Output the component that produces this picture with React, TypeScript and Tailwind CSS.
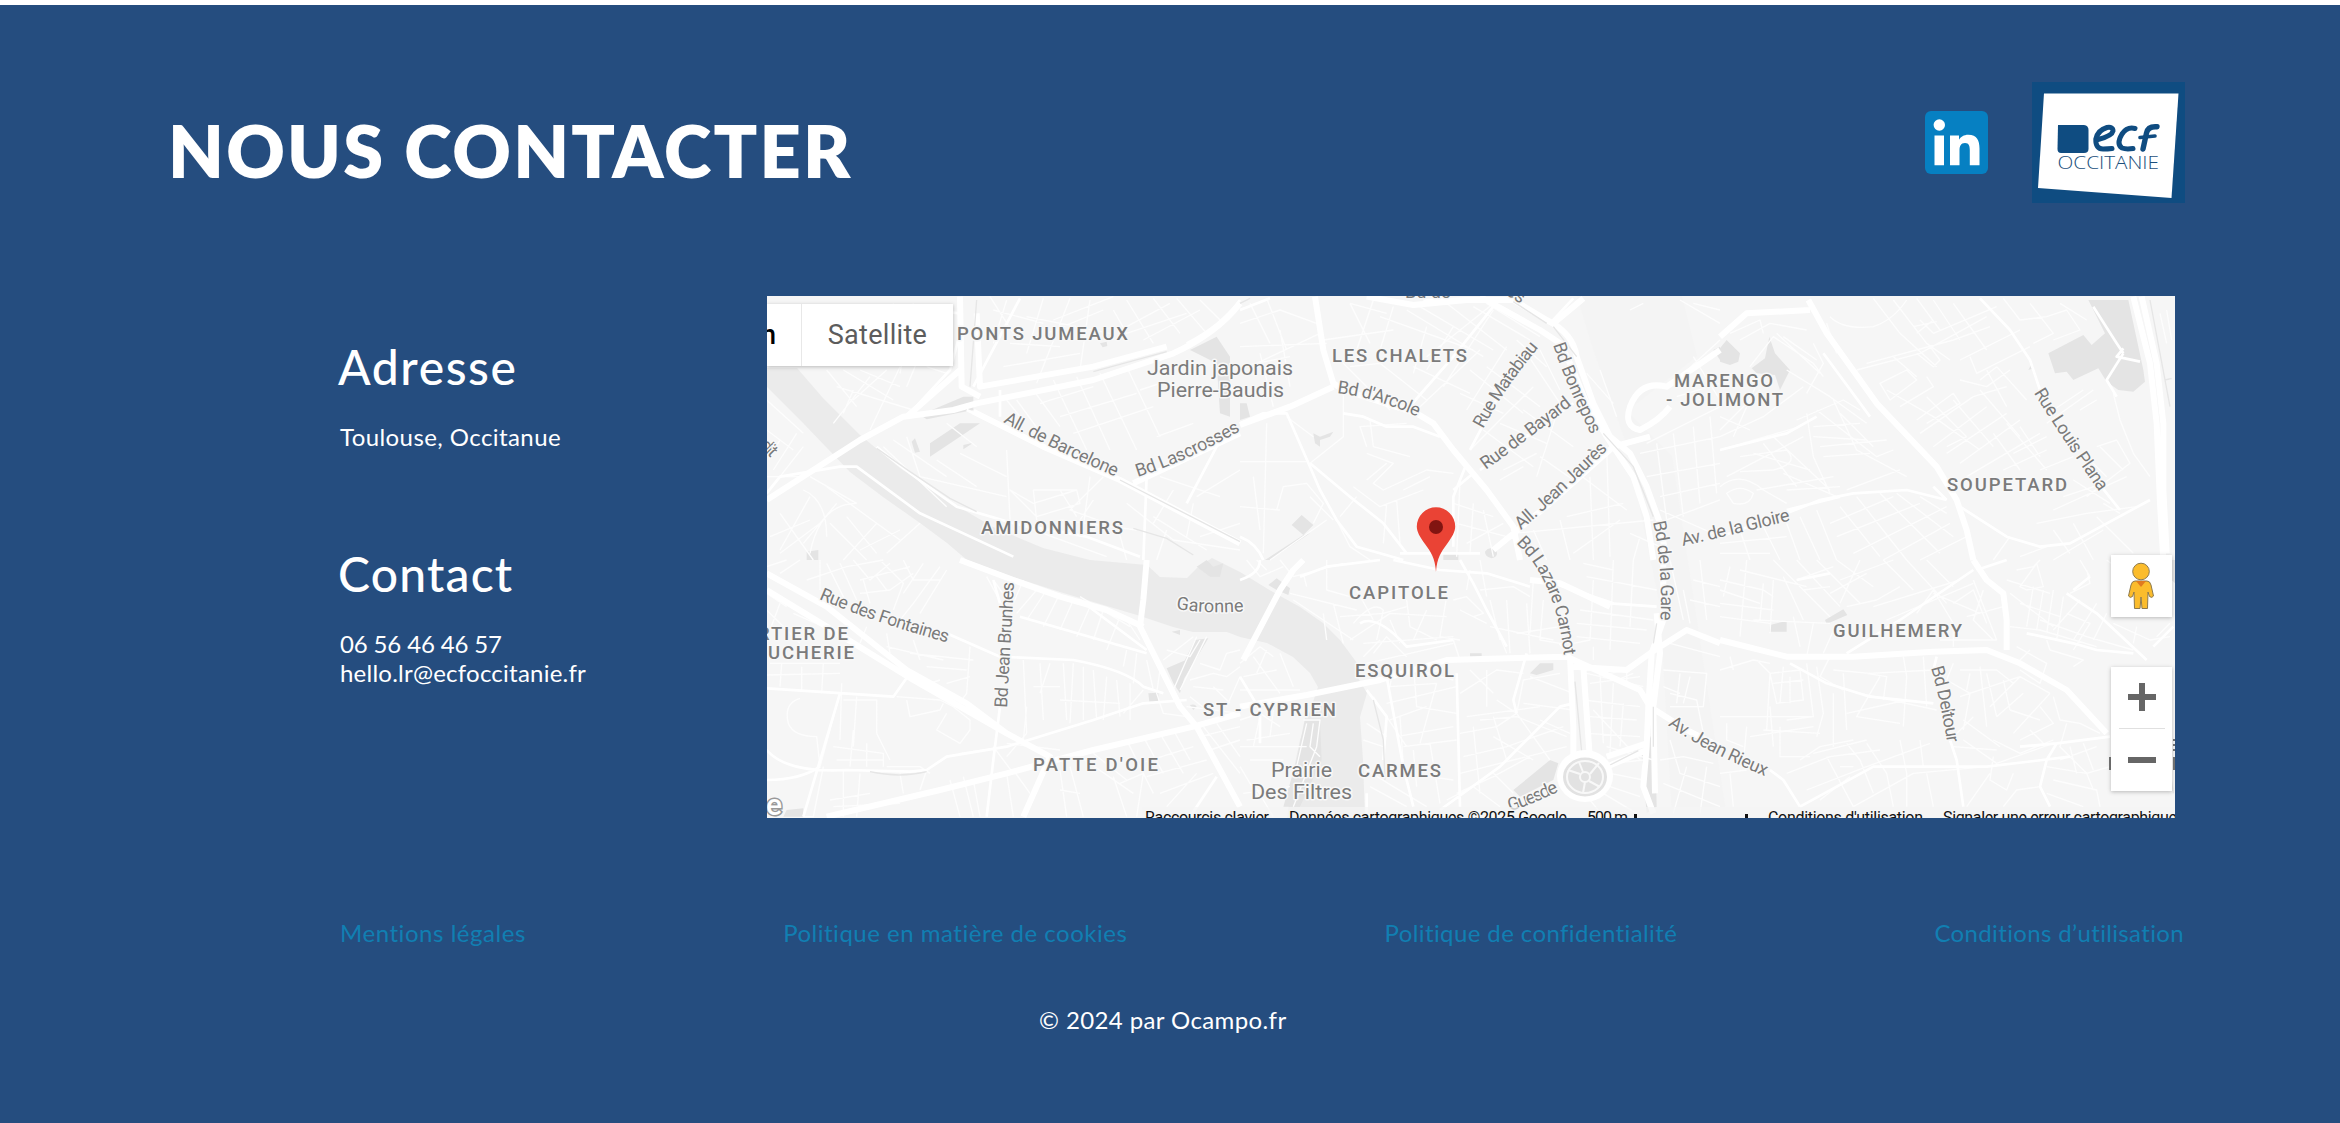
import React from 'react';

type Sector = {
  x: number;
  y: number;
  fine: string;
  medium: string;
  major: string;
  green: string;
  rail: string;
};

/* The street network is kept in six sectors, drawn at three times the map's scale. */
const sectors: Sector[] = [
  {
    x: -7,
    y: -6,
    fine: 'M400 40L430 180M430 60L560 90M460 40L420 250M500 230L560 250M540 50L440 290M250 240L400 330M300 240L420 290M330 260L220 400M380 240L280 330M200 240L290 350M420 230L330 420M230 290L460 360M280 300L250 370M20 330L130 430M20 420L100 480M110 430L40 540M60 450L30 500M130 470L60 560M20 560L140 560M150 560L290 640M130 600Q200 630 200 740M60 670L160 810M30 740L150 690M150 620L60 780M200 590L350 700L250 810M230 640L130 760M290 640Q180 640 150 790M350 700L420 750M420 720L300 780M480 700L380 790M260 680L350 790M210 700L320 810M60 790L180 700M370 470L560 650M400 450L560 560M440 440L480 560L740 620M530 510L650 590M600 490L740 560M740 480L750 690M560 400L650 470M750 600L820 640L950 600L960 640L830 680ZM820 600L830 690M900 600L950 680M820 600L950 600M990 560L970 710M1030 560L930 660L1040 700M900 470L1130 600M1000 630L960 690M690 20L760 130M700 60L850 100M740 30L700 160M850 25L800 190M930 25L830 280M990 30L960 240M880 90L1060 20M800 80L1050 130M860 130L1030 60M1060 60L1100 130L1280 70M1100 30L1180 160M1180 25L1260 130M1250 25L1340 130M1320 30L1390 100M1150 150L1320 60M1100 110L1230 40M740 330L780 380M770 330L850 440M820 300L900 410M880 270L980 480M950 260L1050 480M1020 250L1130 480M840 340L1000 290M900 380L1130 310M940 430L1180 350M1100 230L1200 440M1140 300L1200 280M1190 440L1300 400M1160 560L1310 480M1200 560L1380 620M1240 600L1180 700M1100 640L1240 750L1440 780M1180 680L1340 780M1300 640L1280 740M1320 740L1440 700M1070 700L1100 810M1220 720L1190 810M900 690L1130 720M740 690L1040 800M1370 470L1290 620M1440 540L1310 620M750 160L900 170M730 230L960 190',
    medium:
      'M20 610L60 560L240 530L290 530L480 670L760 800M350 470Q420 530 590 650L760 700L980 740L1140 800M620 360L900 490M720 300L720 380M500 60L600 70M780 25L640 290M1160 560L1150 810M1370 470L1280 640M1440 30Q1380 110 1280 160M440 380L570 240L600 130',
    major:
      'M20 630L300 450L430 380L580 360L650 340L1000 270L1240 190Q1370 130 1440 40M600 20L605 290L660 320M650 70L660 290L1000 230L1220 170M440 380L600 240M640 365L850 470L1080 570L1440 760M1120 580L1440 430',
    green:
      'M480 375L610 320L640 320L640 360L500 388ZM510 460L600 400L660 400L600 440L510 500ZM455 455L465 445L480 485L465 488ZM610 465L640 458L610 478ZM1290 180L1370 140L1410 200L1410 380L1380 370L1370 220ZM140 785L175 780L175 810L140 810ZM1020 160L1040 155L1042 168L1028 172Z',
    rail: 'M350 475L450 545L570 625L650 665M650 30L630 290M1080 570L1440 755M1120 715L1220 745L1300 795M1000 245L1220 185',
  },
  {
    x: 473,
    y: -6,
    fine: 'M0 100L120 60L230 100M30 40L90 160M80 25L140 180M0 170L260 160M50 220L240 130M120 120L150 290M0 230L150 200M60 190L100 350M330 40L440 70M330 40L390 160M400 30L350 180M460 50L420 180M250 150L460 120M420 80L700 180M500 60L730 200M540 50L760 180M620 40L800 180M700 50L870 150M740 40L900 140M560 200L780 25M610 290L760 60M530 360L720 180M560 110L520 250M640 110L560 240M520 230L690 310M560 330L420 220L330 230M300 210L450 360M690 240L850 370M740 230L900 350M660 310L790 370M800 170L680 360M860 190L960 340M900 180L960 300M830 150L920 230M690 480L800 370L880 290M780 400L920 460M730 420L880 530M960 340L890 560M850 360L1000 470M900 500L1000 570M890 490L790 540M780 570L850 530M0 515L200 515M80 400L70 790M0 650L120 660M40 560L60 720M310 290L310 440L210 520M220 440L140 380M390 390L400 470L510 500M380 470L360 410L500 400M380 490L460 520L400 580L430 600L560 540L640 550M440 520L380 570M490 600L570 560M340 590L420 650L550 600M110 660L130 590L200 580L250 640L220 700M280 690L210 620M260 690L90 810M290 690L330 770L390 810M440 640L430 760M350 620L300 680M470 630L480 760M660 570L650 800M700 640L690 790M730 660L760 800M640 640L760 680M650 700L800 740M680 760L790 700M820 730L1240 690M880 720L920 810M960 690L990 810M1050 560L1060 810M1100 470L1110 800M1000 540L1160 660M980 680L1150 640M1140 690L1000 790M1170 730L1260 770M1200 740L1180 810M1080 240L1130 380M1040 250L1120 340M1200 490L1440 440M1220 560L1440 520M1250 460L1280 690M1300 430L1330 680M1360 410L1380 640M1410 380L1430 610M1260 620L1440 580M1280 690L1440 630M1260 660L1440 740M1360 200L1440 330M1320 260L1440 150M1310 320L1440 280M1220 460L1440 350M1320 30L1440 100M1210 40L1170 60M1360 40L1440 60',
    medium:
      'M0 400L70 370L140 370L210 530L240 600L290 690L350 770L420 790L490 810M210 520L330 620L430 700L500 790M310 370L370 380L440 410L520 410L600 440M690 480L780 310L860 170M640 600L700 550M680 520L640 620L640 770M720 540L1000 340M500 360L640 200L760 50M0 740Q50 760 70 810M0 60L90 25M480 790L720 790M550 30L700 25M1000 25L930 100',
    major:
      'M225 20L250 180L280 280L310 300L530 370L580 400L640 480L740 600L820 710L840 810M0 405L150 350L280 290M380 20L520 45L680 30L820 30L920 90Q1000 130 1010 200L1060 340L1110 440L1170 490L1220 590L1260 700L1280 810M720 20L900 120L960 160L990 220L1040 340L1100 440L1180 560L1220 680L1240 810M760 780L930 640L1120 470L1230 440M940 100L1030 25M1440 180L1280 290Q1200 270 1170 350Q1150 410 1200 420Q1260 390 1290 350',
    green:
      'M0 340L20 340L30 380L0 390ZM220 430L240 440L280 425L270 440L240 450L240 470L225 460ZM155 705L185 675L220 705L190 735ZM190 735L210 730L90 810L75 810ZM1420 180L1440 170L1440 210ZM735 785Q750 765 770 785Q775 800 755 805Q735 800 735 785ZM610 790L655 785L655 810L610 810Z',
    rail: 'M820 35L920 100M940 110L1010 200M1090 430L1180 530L1240 680M0 40L30 25',
  },
  {
    x: 953,
    y: -6,
    fine: 'M330 80Q370 120 460 110Q520 90 560 30M460 25L540 130L650 230M520 30L620 160L690 210M590 25L660 120M640 30L720 150M700 40L800 180M580 110L650 95M600 90L640 130M590 130L640 90M410 240L600 190L800 80M440 220L700 150L810 110M520 200L590 260M590 190L640 230L660 210L630 170M640 130L830 50M850 25L900 90L980 80M930 40L1000 130L940 160M980 80L1040 60L1080 120L1000 150M1020 40L1100 90M750 200L770 250L930 170M720 210L760 190L900 120M480 280L560 240L590 270L510 330ZM500 300L640 380L780 480M540 350L640 290L620 260M590 390L700 310L720 340L620 400M600 430L760 320L860 290M640 470L800 350M680 490L860 370M720 520L900 390M740 560L960 430M780 270L830 230M800 240L860 350M830 230L920 330M870 240L800 290L720 270M620 320L740 440M700 330L820 470M780 300L900 440M820 430L900 540M860 400L980 540M900 410L960 500M880 490L980 440M850 540L980 480M960 540L1060 500M980 400L1120 300M1000 360L1090 300M1080 360L1130 330M1130 470L1190 450L1230 520L1100 620M1100 500L1160 560M1140 470L1210 540M1060 570L1170 640M1030 620L1150 580M1000 660L1220 560M1180 310L1200 390L1240 490L1290 560M1320 70L1340 160M1340 60L1355 150M0 440L130 380L250 290M0 420L120 300M0 380L90 420M40 440L120 260M90 230L160 140L280 220L310 260M190 140L290 210M170 130L300 250M30 130L120 90L130 130M60 150L150 100L260 120M280 160L310 220L260 310M320 100L350 190M330 130L380 220M200 240L330 320L440 400M230 390L370 330L420 360M260 370L280 500L330 610M290 360L470 500L520 480M340 330L410 480L560 560M360 370L460 470M280 410L420 400M280 440L440 450M300 470L500 450M310 500L450 490M0 480L240 410M20 560L250 440M100 490L270 540M130 460L230 590M160 440L330 600M60 500L200 480Q240 520 160 540L60 545M0 590Q60 540 130 600L200 640M20 610Q60 580 100 610Q90 650 40 640ZM110 600L340 560M190 550L350 620M200 600L360 590M380 600L540 540M360 650L480 800M410 620L560 810M480 610L660 790M530 610L700 740M600 620L680 670M330 700L520 620M350 740L600 640M400 790L680 650M490 810L690 700M600 810L740 740M240 680L300 810M290 660L350 810M200 700L240 810M120 690L180 810M60 720L90 810M0 760L200 740M0 790L150 790M680 470L740 440M950 700L1100 670L1250 650M1000 720L1050 790M1060 700L1120 810M1130 680L1240 790M1150 720L1000 810M1200 670L1150 640M870 740L820 810M900 800L980 770',
    medium:
      'M0 480L200 430L290 380M360 620L200 660M0 740L200 670L300 630L400 610L560 600L680 630M720 650L860 740L960 770L1050 760L1290 630M780 25L870 120L930 210L960 300M1120 50L1190 160L1210 190M1210 175L1190 200L1260 215M1210 190L1160 270L1190 320M1120 560L1200 660M680 630L640 590M310 190L450 380',
    major:
      'M0 140L80 70L270 60M265 30L320 130L470 340L650 530L710 630L740 720L760 810M1240 20L1290 220L1310 400L1320 640L1330 810M1265 20L1310 220L1330 400L1330 600L1340 790',
    green:
      'M0 175L20 150L60 190L55 215L30 225L0 215ZM95 235L135 205L148 140L165 190L210 240L180 300L165 255L110 250ZM985 190L1090 135L1115 165L1155 130L1105 30L1225 30L1270 240L1275 275L1240 305L1195 300L1160 275L1135 235L1060 270L1040 245L1005 250ZM925 240L935 222L942 235Z',
    rail: 'M1290 30L1350 350M1335 270L1355 265',
  },
  {
    x: -7,
    y: 264,
    fine: 'M20 20L80 0M60 40L120 0M180 0L180 90M140 60L260 20L370 0M200 10L260 130M240 10L290 120M280 0L330 60L390 10M300 60L450 20M300 100L390 90L460 40M310 60L330 130M350 50L380 90M360 0L430 70L400 150M430 0L460 60L540 60M490 10L430 100M540 20L460 130L420 180M560 30L480 160M20 100L80 140M60 130L30 210M100 160L190 200M20 150L120 250M320 200L300 250M380 220L390 280M380 260L550 300M460 240L480 300M450 280L640 300M500 320L620 330M560 370L630 350M630 260L620 400L590 440M540 360L480 380M20 345L240 340M65 310L60 380M125 320L125 390M190 310L185 400M30 310L240 310M245 370L240 540M240 400L180 620M250 420L350 420L350 520M290 410L280 560M120 415Q70 430 85 490Q100 530 170 530L180 620M220 560L370 580L370 620M230 600L370 600M280 510L270 620M320 550L320 620M350 520L390 600M440 420L450 470L540 450L550 430M540 420L580 440L630 480L630 510L600 550L530 510L560 460M410 410L540 420M510 640L480 620L380 620M250 630L250 770M300 640L290 770M420 640L430 700M500 630L480 690M190 620L160 770L130 770M210 720L330 700M220 740L420 730M700 60L750 130M680 50L740 160M790 60L760 130M830 90L770 160M860 90L800 180M900 100L850 200M940 120L900 210M990 140L950 230M1030 150L1000 240M1080 170L1040 270M1100 180L1140 240M960 110L1110 200M790 300L800 520M840 310L850 480M870 310L840 400M910 310L920 480M940 310L930 490M970 320L970 480M1000 330L1010 480M1040 350L1030 480M1070 360L1080 470M1110 370L1110 480M1150 390L1090 460M820 380L900 380M900 420L1080 430M1100 270L1090 320M1130 280L1120 370M1160 300L1180 390M1200 330L1190 400L1210 460L1280 470M800 440L790 540M740 550L900 570M800 520L740 590M700 560L760 640M600 580L740 560M570 660L600 770M610 650L640 770M640 660L660 770M740 640L760 770M760 630L810 700M900 630L920 770M930 620L970 770M900 690L960 700M960 590L1120 700M1000 580L1100 660M1080 670L1150 640L1130 770M1060 650L1100 770M1100 540L1180 700M1150 530L1210 640M1200 520L1270 640M1240 510L1290 600M1140 610L1300 560M1160 650L1340 600M1200 700L1360 640M1220 740L1310 640M1330 500L1440 640M1370 490L1440 590M1320 530L1440 500M1350 570L1440 540M1210 300L1300 230M1220 270L1290 290L1320 240M1310 230L1240 390M1340 230L1260 390M1290 360L1360 340L1400 350L1440 320M1320 310L1380 330L1400 280L1440 270M1300 380L1390 390M1360 380L1410 430M1440 350L1400 440M1290 410L1340 450M1280 440L1440 460',
    medium:
      'M20 385L400 410L450 340M20 570Q80 640 260 630L450 635L500 630L560 590L740 560L1000 480L1150 430L1280 420M560 220L720 290L940 300Q1100 330 1150 380L1210 400M780 170L1160 280M960 120L1160 270M700 60L720 130M720 440L710 520L700 600L680 770M20 660Q120 660 180 620M130 770L240 400M1370 650L1290 770',
    major:
      'M20 40L200 140L440 330L620 430L740 520L870 590L790 770M20 90L200 200L460 360L740 520M600 0L760 60L900 110L1040 150L1150 200M1160 0L1150 120L1140 200L1180 280L1260 440L1310 500L1440 740M200 770L540 690L740 640L1000 570L1300 500L1440 460',
    green:
      'M1165 400L1195 398L1195 425L1168 425ZM1220 325L1290 295L1260 400L1240 370ZM1305 240L1345 235L1270 360L1260 330ZM1340 0L1360 20L1390 10L1380 50L1350 50L1310 20ZM1235 215L1260 210L1260 225ZM80 750L130 745L130 770L70 770ZM1290 435Q1305 430 1310 440L1300 450Z',
    rail: 'M330 635Q420 655 500 635M0 770L20 700',
  },
  {
    x: 473,
    y: 264,
    fine: 'M20 0L60 50L130 20M50 0L80 30M120 0L160 50M160 50L310 10M260 0L260 90L330 110M200 80L190 40M150 100L350 150M160 120L340 240M250 160L260 240M280 130L310 250M300 170L430 160L500 140M330 240L450 160L620 170M350 90L400 180M340 190Q400 120 430 150L410 240M450 180L480 250M500 120L510 200L590 240M560 150L520 240M620 110L600 230L660 240M640 120L680 110L730 160L700 170M660 150L740 190M690 30L680 90M720 0L740 110M720 90L820 80L870 110M750 120L780 240M760 180L800 280M800 120L810 280M880 60L870 220M910 120L900 240L960 250M830 220L960 200M750 200L940 240M860 130L870 280M370 250L640 230M370 290L420 240M380 310L640 250M400 280L440 230L500 290M640 240L660 300M430 340L520 330L640 360M460 320L450 380L590 370M520 350L600 330M520 310L530 440L650 460M590 370L540 550M440 430L650 380M450 480L560 440M480 470L490 620M470 530L640 500M490 560L650 540M520 570L530 680M570 550L600 730M500 640L640 660M380 630L460 680L560 740M390 680L500 740M680 470L900 440M660 400L770 330L850 340M690 330L760 400M740 330L740 440M660 520L770 500L830 460M760 470L800 600M700 500L720 700M670 590L800 560L970 500M660 640L820 600L980 560M720 480L830 470L980 530M830 460L930 600M770 420L830 460L850 360L960 340M870 350L1000 400M850 430L1000 450M900 480L990 520M650 700L760 650L870 590M620 720L700 680L780 740M760 640L820 700M880 600L760 530M1030 10L1120 30M1040 50L1250 90M1060 60L1050 240L1000 250M1010 190L1220 210M1020 150L1240 180M1010 230L1200 250M1120 0L1110 270M1180 0L1170 200M1060 260L1060 300M1040 340L1210 380M1050 370L1200 350M1030 420L1200 440M1050 470L1190 480M1040 520L1200 530M1080 340L1090 550M1120 370L1110 580M1150 430L1140 560M1110 340L1160 330L1160 370M1130 360L1180 340M1100 560L1240 600M1060 450L1200 600M1120 610L1210 600M1110 640L1210 660M1110 680L1200 710M1090 700L1190 760M1050 720L1090 770M0 310L60 260L100 290M10 350L110 330M40 290L120 400M80 270L50 340M120 280L160 380M0 390L180 390M0 480L60 460L120 500M20 540L150 520M60 470L40 560M100 450L90 530M0 560L200 560M30 600L130 600M0 620L60 720M10 700L150 680M40 670L100 770M400 410L500 560M380 490L440 530M370 540L430 560M190 480L240 480L230 560L160 740M200 490L170 620M220 490L210 560L240 590M1270 330L1400 340L1390 440L1290 440M1270 380L1320 400M1320 340L1310 430M1290 400L1370 420L1390 520M1350 350L1330 430M1290 540L1320 640L1440 680M1260 600L1330 590L1420 610M1270 670L1440 740M1340 620L1300 760M1400 620L1380 760M1330 90L1350 190M1290 0L1330 180M1360 60L1440 80M1350 120L1440 140M1380 0L1400 180M1290 250L1440 290',
    medium:
      'M0 60Q60 40 60 0M180 50L260 20L420 0M460 0L600 30L740 40L870 80M360 190Q410 160 500 260L640 240M440 350L490 620L520 740M650 340L660 740M940 70L1120 130M860 280L820 420L830 460M380 390L440 470L430 600M600 750L780 620L960 440L1000 430M380 760L380 700M660 0L700 70L740 150L800 260M960 250L1000 300M1110 130L1250 140M0 350L60 450L60 550',
    major:
      'M0 440L200 405L420 360L620 300L980 290L1200 390L1230 440L1340 510L1440 560M990 290L1000 500L1000 600M1030 320L1050 600M1000 320L1160 330L1230 280L1340 210L1440 250M1270 0L1270 180L1235 280L1225 440L1220 560L1210 680L1240 760M1250 160L1260 280L1240 440L1245 700M1100 590L1220 550M1100 620L1220 570M870 60L960 70L1110 140M10 300L120 90L160 30L190 0',
    green:
      'M85 75L110 55L150 85L145 105L110 90ZM870 340L900 310L940 310L940 330L890 345ZM820 690L930 600L955 610L940 660L840 710ZM195 475L240 480L245 600L180 740L130 740L170 600ZM690 280L725 280L725 290L690 290ZM1205 590L1245 500L1250 740L1220 760Z',
    rail: 'M1005 365L1025 575M1110 615L1195 572M1250 190L1240 250M400 420L430 540L435 660M1240 440L1240 560',
  },
  {
    x: 953,
    y: 264,
    fine: 'M0 60L130 90L160 110M0 90L120 130M0 130L160 150M0 170L150 190M30 20L10 110M80 0L60 230M60 30L260 80M130 70L120 180M160 60L150 220M190 50L250 180M160 0L330 170M230 0L360 140M290 0L420 130M350 0L460 80M420 0L360 130M360 60L520 0M330 100L440 40M230 60L340 20M250 90L330 80M100 180L330 190M220 170L240 260M280 190L260 290M350 190L310 280M380 140L470 120L540 80M490 0L580 90M560 0L680 130M620 0L700 80M460 140L720 60M500 180L760 70M590 160L640 90L700 190M640 100L780 160M700 130L760 90L800 190M760 60L830 240L660 240M740 170L850 140M700 190L700 260M790 90L760 180L820 240M890 30L940 20L960 0M900 80L950 10L970 80L920 90ZM860 60L990 100M870 100L1000 200M900 130L1020 170M940 80L920 200M970 90L950 210M1000 90L980 220M1030 110L1010 240M870 200L960 210L1130 260M960 180L1100 230L1240 270M1040 160L1110 190L1060 270M1080 120L1000 210M1130 130L1060 240M1160 160L1120 240M1180 190L1290 240M980 240L990 270L1090 300L1060 320M890 260L980 310L960 370L900 330M930 270L900 300M0 330L100 300L150 310M40 330L30 290M110 300L150 340L140 510M150 340L240 330L250 420L170 430ZM190 320L180 430M160 370L250 360M210 350L210 430M150 440L160 560M260 310L280 470L200 480M290 320L310 460L290 530M330 290L300 350L370 390M370 340L380 510M440 340L500 350L490 420M480 350L410 470L540 490M550 290L560 350L550 500M610 290L620 440M380 460L560 420M420 400L650 450M340 400L340 560M0 470L280 470M20 490L20 540L70 560M80 500L70 610M90 530L280 500M180 500L180 590L270 590M0 640L80 630M30 640L40 740M130 510L300 520M240 600L300 560L400 540M280 580L440 540M200 640L330 590L480 570M260 690L440 620L630 550M300 720L390 650M320 590L400 740M380 550L420 600L460 700M440 550L500 640L520 740M540 540L560 640L560 740M600 540L610 620M400 740L580 640L800 620M360 620L400 620M620 640L640 740M700 310L680 360L750 400L730 510M720 330L830 330L880 370M750 340L740 390M780 320L800 500M800 340L830 470M850 360L870 450M720 410L900 350L990 400M810 440L900 350M830 470L910 400M870 450L960 480M880 520L990 400M900 540L1000 490L960 440M930 510L970 550M820 540L900 580L1000 540M730 480L840 560M760 470L700 530M730 540L830 610L1000 550M820 590L810 660L860 690L880 640M810 640L740 740M700 560L830 570M850 740L890 690L960 680M1000 410L1020 480L1080 490L1140 520M1040 490L1020 560L1100 640M980 620L1100 640L1170 620M1000 660L1130 690L1140 740M1020 600L1130 560M1050 560L1070 640M1090 550L1120 630M980 700L1090 740M1100 640L1120 690M340 330L450 340L640 330M1100 30L1110 70L1050 100M1080 0L1110 50M1200 30L1160 0M1290 240L1350 230M1310 230L1350 190M1240 250L1250 200',
    medium:
      'M380 280L540 180L760 30M210 310L320 370L450 410L640 430M650 290L640 330M690 540L710 600L730 740M240 740L460 620L800 620L1050 590M900 560L1010 550L1170 530M1010 550L980 600L960 680L990 740M920 220L1060 250L1130 270L1240 280M1040 100L1130 160L1280 300M1300 260L1360 200M150 630L190 660L240 740M330 40L230 60M770 30L860 0M1060 90L1110 50',
    major:
      'M0 240L200 290L400 290L640 275L800 270L900 310L1040 390L1160 520M760 0L800 60L850 100L860 180L860 270M1330 0L1330 60',
    green:
      'M150 195L200 182L200 215L148 215ZM315 180L370 148L382 165L320 192ZM1355 0L1365 0L1365 70L1355 60Z',
    rail: 'M1330 500L1360 700',
  },
];

type Label = { x: number; y: number; w: number; t: string };

const districts: Label[] = [
  { x: 190, y: 44, w: 171, t: 'PONTS JUMEAUX' },
  { x: 214, y: 238, w: 142, t: 'AMIDONNIERS' },
  { x: 565, y: 66, w: 135, t: 'LES CHALETS' },
  { x: 907, y: 91, w: 99, t: 'MARENGO' },
  { x: 899, y: 110, w: 117, t: '- JOLIMONT' },
  { x: 1180, y: 195, w: 120, t: 'SOUPETARD' },
  { x: 582, y: 303, w: 99, t: 'CAPITOLE' },
  { x: 588, y: 381, w: 99, t: 'ESQUIROL' },
  { x: 436, y: 420, w: 133, t: 'ST - CYPRIEN' },
  { x: 591, y: 481, w: 83, t: 'CARMES' },
  { x: 266, y: 475, w: 125, t: "PATTE D'OIE" },
  { x: -9, y: 344, w: 90, t: 'RTIER DE' },
  { x: 1, y: 363, w: 86, t: 'UCHERIE' },
  { x: 1066, y: 341, w: 129, t: 'GUILHEMERY' },
];

const places: Label[] = [
  { x: 380, y: 79, w: 146, t: 'Jardin japonais' },
  { x: 390, y: 101, w: 127, t: 'Pierre-Baudis' },
  { x: 504, y: 481, w: 61, t: 'Prairie' },
  { x: 484, y: 503, w: 101, t: 'Des Filtres' },
];

const streets: { id: string; d: string; w: number; t: string }[] = [
  { id: 'barcelone', d: 'M236 126Q296 159 370 190', w: 125, t: 'All. de Barcelone' },
  { id: 'lascrosses', d: 'M371 181Q425 164 490 125', w: 113, t: 'Bd Lascrosses' },
  { id: 'arcole', d: 'M570 97Q620 103 670 131', w: 84, t: "Bd d'Arcole" },
  { id: 'matabiau', d: 'M716 133Q741 85 785 36', w: 99, t: 'Rue Matabiau' },
  { id: 'bayard', d: 'M719 174Q764 141 822 96', w: 108, t: 'Rue de Bayard' },
  { id: 'jaures', d: 'M754 234Q799 196 860 134', w: 119, t: 'All. Jean Jaurès' },
  { id: 'bonrepos', d: 'M786 49Q801 95 835 160', w: 98, t: 'Bd Bonrepos' },
  { id: 'gare', d: 'M886 226Q898 280 892 345', w: 99, t: 'Bd de la Gare' },
  { id: 'carnot', d: 'M749 247Q795 290 799 385', w: 125, t: 'Bd Lazare Carnot' },
  { id: 'gloire', d: 'M916 250Q965 239 1045 219', w: 111, t: 'Av. de la Gloire' },
  { id: 'plana', d: 'M1267 97Q1293 140 1345 214', w: 119, t: 'Rue Louis Plana' },
  { id: 'fontaines', d: 'M52 303Q110 328 200 352', w: 136, t: 'Rue des Fontaines' },
  { id: 'brunhes', d: 'M240 412L248 270', w: 126, t: 'Bd Jean Brunhes' },
  { id: 'rieux', d: 'M901 429Q940 458 1020 489', w: 110, t: 'Av. Jean Rieux' },
  { id: 'deltour', d: 'M1164 372Q1174 405 1183 465', w: 77, t: 'Bd Deltour' },
  { id: 'garonne', d: 'M409 313Q445 319 490 314', w: 68, t: 'Garonne' },
  { id: 'guesde', d: 'M743 515Q770 507 800 491', w: 53, t: 'Guesde' },
  { id: 'dit', d: 'M-8 150L20 178', w: 17, t: 'dit' },
];

const water =
  'M0 72L30 72L56 102L93 139L133 172L180 204L226 231L276 252L323 264L380 269L393 281L420 282L430 272L445 262L473 276L506 296L533 311L556 327L573 344L590 367L588 377L600 397L593 421L596 464L598 522L520 522L526 477L533 444L541 421L551 391L543 377L526 361L500 347L473 341L460 336L426 336L406 331L370 319L343 311L293 296L246 281L200 264L180 247L153 227L116 201L83 176L36 127L0 91Z';

function Layer({ part, className, width }: { part: 'fine' | 'medium' | 'major' | 'rail' | 'green'; className: string; width?: number }) {
  return (
    <g className={className} strokeWidth={width} strokeLinejoin="round">
      {sectors.map((s) => (
        <path key={`${s.x}${s.y}`} transform={`translate(${s.x} ${s.y}) scale(.33333)`} d={s[part]} />
      ))}
    </g>
  );
}

function CityMap() {
  return (
    <svg viewBox="0 0 1408 522" className="block h-[522px] w-[1408px] font-['Roboto',sans-serif]">
      <rect width="1408" height="522" fill="#f6f6f6" />
      <path d="M810 0L915 0L930 60L860 115L905 160L960 522L905 522L893 310L860 150L825 50Z" fill="#f4f4f4" />
      <path d={water} fill="#ebebeb" />
      <Layer part="green" className="fill-[#e4e4e4]" />
      <Layer part="fine" className="fill-none stroke-[#fdfdfd]" width={4} />
      <Layer part="medium" className="fill-none stroke-white" width={8} />
      <Layer part="major" className="fill-none stroke-white" width={18} />
      <Layer part="rail" className="fill-none stroke-[#e6e6e6]" width={4} />

      {/* Grand Rond */}
      <ellipse cx="818" cy="480" rx="28" ry="26" fill="#fff" />
      <g fill="none" stroke="#f8f8f8" strokeWidth="2">
        <ellipse cx="818" cy="481" rx="22" ry="19.500" fill="#e2e2e2" stroke="none" />
        <ellipse cx="818" cy="481" rx="18" ry="16" />
        <circle cx="818" cy="481" r="5" />
        <path d="M813 478L801 474M823 478L832 467M818 486L816 497M822 485L833 491M816 476L812 466" />
      </g>

      <g fill="#7b7b7b" stroke="#f8f8f8" strokeWidth="3" strokeLinejoin="round" paintOrder="stroke">
        <g fontSize="18.500" fontWeight="500">
          {districts.map((l) => (
            <text key={l.t} x={l.x} y={l.y} textLength={l.w}>
              {l.t}
            </text>
          ))}
        </g>
        <g fontSize="21">
          {places.map((l) => (
            <text key={l.t} x={l.x} y={l.y} textLength={l.w} lengthAdjust="spacingAndGlyphs">
              {l.t}
            </text>
          ))}
        </g>
        <g fontSize="18">
          {streets.map((s) => (
            <React.Fragment key={s.id}>
              <path id={s.id} d={s.d} fill="none" stroke="none" />
              <text textLength={s.w}>
                <textPath href={`#${s.id}`} textLength={s.w}>
                  {s.t}
                </textPath>
              </text>
            </React.Fragment>
          ))}
          <text x="638" y="2">Bd de</text>
          <text x="738" y="-2" transform="rotate(32 738 -2)">es</text>
        </g>
      </g>

      <text x="-1" y="519" fontSize="30" fontWeight="500" fill="#fff" stroke="#999" strokeWidth="3" paintOrder="stroke">
        e
      </text>

      {/* Location pin */}
      <path d="M669 276C668 262 664 256 658 248C653 241 649.800 236 649.800 230.500A19.200 19.200 0 0 1 688.200 230.500C688.200 236 685 241 680 248C674 256 670 262 669 276Z" fill="#ea4335" />
      <circle cx="669" cy="231" r="7" fill="#811411" />

      <g fill="#111" fontSize="16">
        <rect x="375" y="511" width="1033" height="11" fill="#f5f5f5" fillOpacity=".7" />
        <text x="378" y="527" textLength="124">Raccourcis clavier</text>
        <text x="522" y="527" textLength="278">Données cartographiques ©2025 Google</text>
        <text x="820" y="527" textLength="41">500 m</text>
        <path d="M867 518h3v4h-3zM978 518h3v4h-3z" />
        <text x="1001" y="527" textLength="155">Conditions d'utilisation</text>
        <text x="1176" y="527" textLength="234">Signaler une erreur cartographique</text>
      </g>
      <path d="M1342 461h2v13h-2zM1406 443h2v2h-2zM1406 448h2v2h-2zM1406 453h2v2h-2zM1406 461h2v13h-2z" fill="#757575" />
    </svg>
  );
}

function Pegman() {
  return (
    <svg viewBox="0 0 28 48" className="h-[48px] w-[28px]">
      <path
        d="M8 19L20 19Q23 19 24 23L26.500 34Q25 36.500 22.500 34.500L21 30L20.500 46.500H15L14 35L13 46.500H7.500L7 30L5.500 34.500Q3 36.500 1.500 34L4 23Q5 19 8 19Z"
        fill="#fbbc2c"
        stroke="#8d7a4e"
        strokeWidth="1"
      />
      <path d="M9 19H19L14 25Z" fill="#e07a1f" />
      <circle cx="14" cy="9.500" r="8.300" fill="#fbbc2c" stroke="#8d7a4e" strokeWidth="1" />
    </svg>
  );
}

function MapPanel() {
  return (
    <div className="relative h-[522px] w-[1408px] overflow-hidden">
      <CityMap />
      <div className="absolute left-0 top-2 flex h-[62px] w-[186px] bg-white font-['Roboto',sans-serif] text-[27px] leading-[62px] shadow-[0_1px_4px_rgba(0,0,0,0.25)]">
        <div className="flex w-[35px] justify-end overflow-hidden border-r border-[#e8e8e8] pr-[25px] font-medium text-black">
          <span>Plan</span>
        </div>
        <div className="flex-1 text-center tracking-[0.3px] text-[#5c5c5c]">Satellite</div>
      </div>
      <div className="absolute left-[1344px] top-[259px] flex h-[62px] w-[61px] items-center justify-center bg-white pr-[2px] shadow-[0_1px_4px_rgba(0,0,0,0.25)]">
        <Pegman />
      </div>
      <div className="absolute left-[1344px] top-[371px] flex h-[124px] w-[61px] flex-col items-center bg-white shadow-[0_1px_4px_rgba(0,0,0,0.25)]">
        <svg viewBox="0 0 28 28" className="mt-4 h-7 w-7">
          <path d="M11 0h6v11h11v6H17v11h-6V17H0v-6h11z" fill="#666" />
        </svg>
        <div className="mt-[17px] h-px w-[46px] bg-[#e0e0e0]" />
        <div className="mt-[28px] h-[6px] w-7 bg-[#666]" />
      </div>
    </div>
  );
}

function LinkedIn() {
  return (
    <svg viewBox="0 0 63 63" className="h-[63px] w-[63px]">
      <rect width="63" height="63" rx="6" fill="#0680c2" />
      <g fill="#fff">
        <circle cx="14.300" cy="14" r="5.700" />
        <path d="M9.500 24.500h9.500v29.800H9.500zM25 24.500h9v4.200c1.500-2.800 4.800-5 9.300-5 8.800 0 11.200 5.800 11.200 13.800v16.800h-9.700V39.500c0-4-.6-7.500-4.800-7.500-4.300 0-5.500 3.300-5.500 7.400v14.900H25z" />
      </g>
    </svg>
  );
}

function EcfLogo() {
  return (
    <svg viewBox="0 0 153 121" className="h-[121px] w-[153px]">
      <rect width="153" height="121" fill="#0f4c81" />
      <path d="M12 11.500L146.500 11.500L139.500 116L6 106Z" fill="#fff" />
      <path d="M26 43H52Q56.500 43.500 56.500 48V67Q56.500 71 52 71H29Q25.500 71 25.500 67Z" fill="#0f4c81" />
      {/* Brush-drawn mark */}
      <g fill="none" stroke="#0f4c81" strokeLinecap="round" strokeLinejoin="round">
        <path d="M66 57.500Q80 54 81 49Q81 44.500 75 45.500Q66 48 63.800 57Q63.500 67 71 67Q76 67 80 66.500" strokeWidth="5" />
        <path d="M103 46.500Q95 44.500 90 52Q84 62 90 66Q94 67.500 101 66.500" strokeWidth="5" />
        <path d="M125 44.800Q116 44 114.500 51L111 67" strokeWidth="5.400" />
        <path d="M108 55.500L123 54" strokeWidth="3.600" />
      </g>
      <text x="25.500" y="87" textLength="101.500" lengthAdjust="spacingAndGlyphs" fontSize="17.500" fontWeight="300" fill="#1c4f7c" className="font-['Open_Sans',sans-serif]">
        OCCITANIE
      </text>
    </svg>
  );
}

export default function App() {
  return (
    <main className="h-[1123px] w-[2340px] overflow-hidden border-t-[5px] border-white bg-[#254d7f] font-['Lato',sans-serif] text-white">
      <header className="flex h-[291px] items-start pl-[168px] pr-[155px]">
        <h1 className="mt-[109px] flex-1 text-[72px] font-extrabold leading-[72px] tracking-[2.22px]">NOUS CONTACTER</h1>
        <div className="mt-[106px]">
          <LinkedIn />
        </div>
        <div className="ml-[44px] mt-[77px]">
          <EcfLogo />
        </div>
      </header>

      <div className="flex h-[522px]">
        <section className="w-[767px] pl-[338px] pt-[47px]">
          <h2 className="text-[48px] font-medium leading-[48px] tracking-[1.6px]">Adresse</h2>
          <p className="mt-[31px] pl-[2px] text-2xl leading-[29px] tracking-[0.42px]">Toulouse, Occitanue</p>
          <h2 className="mt-[99px] text-[48px] font-medium leading-[48px] tracking-[1.2px]">Contact</h2>
          <p className="mt-[31px] pl-[2px] text-2xl leading-[29px] tracking-[-0.14px]">06 56 46 46 57</p>
          <p className="pl-[2px] text-2xl leading-[29px] tracking-[0.23px]">hello.lr@ecfoccitanie.fr</p>
        </section>
        <MapPanel />
      </div>

      <footer className="pt-[100px] text-2xl leading-[29px]">
        <nav className="flex justify-between pl-[340px] pr-[156px] text-[#117fb2]">
          <a className="tracking-[0.55px]">Mentions légales</a>
          <a className="tracking-[0.51px]">Politique en matière de cookies</a>
          <a className="tracking-[0.4px]">Politique de confidentialité</a>
          <a className="tracking-[0.35px]">Conditions d’utilisation</a>
        </nav>
        <p className="mt-[58px] pl-[1039px] tracking-[0.39px]">© 2024 par Ocampo.fr</p>
      </footer>
    </main>
  );
}
